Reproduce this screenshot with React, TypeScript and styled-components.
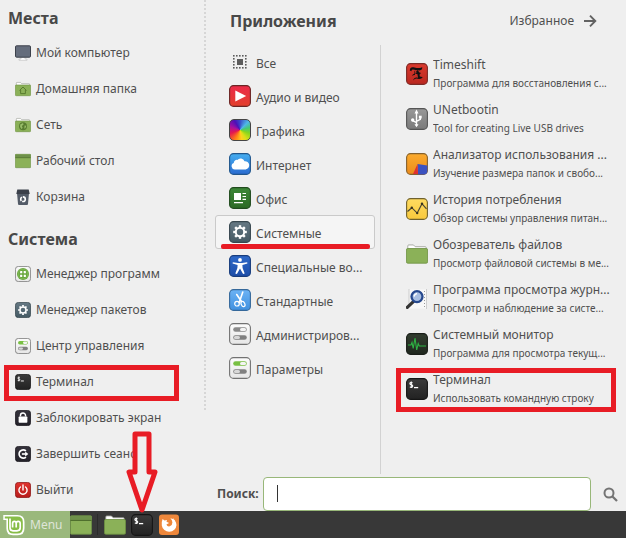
import React, { useState } from "react";
import styled, { createGlobalStyle, css } from "styled-components";

const red = "#e81c25";
const ink = "#4f4f4f";

const GlobalStyle = createGlobalStyle`
  *, *::before, *::after { box-sizing: border-box; }
  body {
    margin: 0;
    background: #efefef;
    color: ${ink};
    font-family: "Noto Sans", sans-serif;
    font-size: 12px;
    line-height: 18px;
  }
  button, input { font: inherit; color: inherit; }
  h2, p, ul { margin: 0; padding: 0; }
  svg { display: block; flex: none; }
`;

const Desktop = styled.div`
  display: flex;
  flex-direction: column;
  min-height: 100vh;
`;

const MenuWindow = styled.div`
  display: flex;
  flex: 1;
`;

const Sidebar = styled.nav`
  width: 204px;
  flex: none;
`;

const DottedDivider = styled.div`
  width: 2px;
  flex: none;
  margin-bottom: 101px;
  background: repeating-linear-gradient(#d6d6d6 0 2px, #efefef 2px 4px);
`;

const Heading = styled.h2`
  font-size: 16px;
  line-height: 22px;
  font-weight: 700;
  color: #484848;
`;

const SidebarHeading = styled(Heading)`
  padding: 7px 8px 6px;

  ul + & { padding-top: 13px; }
`;

const List = styled.ul`
  list-style: none;
`;

const Item = styled.li`
  position: relative;
`;

const plainButton = css`
  display: flex;
  align-items: center;
  gap: 5px;
  border: 0;
  background: none;
  text-align: left;
  white-space: nowrap;
  cursor: pointer;
`;

const PlaceButton = styled.button`
  ${plainButton}
  width: 100%;
  height: 36px;
  padding: 0 0 0 15px;
`;

const Main = styled.main`
  display: flex;
  flex: 1;
  flex-direction: column;
  min-width: 0;
`;

const MainHeader = styled.header`
  display: flex;
  align-items: center;
  justify-content: space-between;
  height: 45px;
  padding: 0 29px 4px 24px;
`;

const FavouritesButton = styled.button`
  ${plainButton}
  gap: 9px;
  padding: 0;
`;

const Columns = styled.div`
  display: flex;
  flex: 1;
  margin-bottom: 3px;
`;

const Categories = styled.nav`
  width: 174px;
  flex: none;
  padding: 0 5px 0 9px;
`;

const CategoryButton = styled.button<{ $selected: boolean }>`
  ${plainButton}
  width: 100%;
  height: 34px;
  padding: 0 0 0 13px;
  border: 1px solid ${(p) => (p.$selected ? "#cacaca" : "transparent")};
  border-radius: 3px;
  background: ${(p) => (p.$selected ? "#f5f5f5" : "transparent")};
`;

const CategoryLabel = styled.span`
  padding-top: 4px;
`;

const Applications = styled.section`
  flex: 1;
  min-width: 0;
  padding: 6px 0 0 25px;
  border-left: 1px solid #d2d2d2;
`;

const AppButton = styled.button`
  ${plainButton}
  width: 100%;
  height: 45px;
  padding: 0;
`;

const AppText = styled.span`
  display: flex;
  flex-direction: column;
  overflow: hidden;
`;

const AppSummary = styled.span`
  font-size: 10px;
`;

const SearchRow = styled.form`
  display: flex;
  align-items: center;
  height: 34px;
  padding: 0 8px 0 11px;
`;

const SearchLabel = styled.label`
  width: 46px;
  font-weight: 700;
`;

const SearchField = styled.div`
  position: relative;
  flex: 1;
  height: 34px;
`;

const SearchInput = styled.input`
  width: 100%;
  height: 100%;
  padding: 0 14px;
  border: 1px solid #98b779;
  border-radius: 4px;
  background: #fff;
  outline: 0;
`;

const Caret = styled.span`
  position: absolute;
  left: 14px;
  top: 8px;
  width: 1px;
  height: 17px;
  background: #333;
`;

const SearchButton = styled.button`
  ${plainButton}
  margin-left: 12px;
  padding: 0;
`;

const Highlight = styled.span<{ $left: number; $right: number; $top: number; $height: number }>`
  position: absolute;
  left: ${(p) => p.$left}px;
  right: ${(p) => p.$right}px;
  top: ${(p) => p.$top}px;
  height: ${(p) => p.$height}px;
  border: 5px solid ${red};
  pointer-events: none;
`;

const Underline = styled.span`
  position: absolute;
  left: 6px;
  right: 5px;
  bottom: 0;
  height: 5px;
  border-radius: 2px;
  background: ${red};
`;

const Taskbar = styled.footer`
  display: flex;
  align-items: center;
  height: 27px;
  background: #383838;
`;

const MenuButton = styled.button`
  ${plainButton}
  width: 70px;
  height: 27px;
  padding: 0 0 0 3px;
  background: #9ab87c;
  color: #dfe5d8;
`;

const TaskButton = styled.button`
  ${plainButton}
  position: relative;
  padding: 0;
`;

const TaskSeparator = styled.span`
  width: 1px;
  height: 21px;
  margin: 0 6px 0 5px;
  background: #2b2b2b;
`;

const TaskGroup = styled.div`
  display: flex;
  align-items: center;
  gap: 5px;
`;

const ArrowLayer = styled.span`
  position: absolute;
  left: -5px;
  bottom: 22px;
  pointer-events: none;
`;

type IconProps = { size?: number };

const Tile = ({ size = 22, from, to, edge, children }: IconProps & { from: string; to: string; edge: string; children?: React.ReactNode }) => {
  const id = React.useId();
  return (
    <svg width={size} height={size} viewBox="0 0 22 22" aria-hidden="true">
      <linearGradient id={id} x2="0" y2="1">
        <stop stopColor={from} />
        <stop offset="1" stopColor={to} />
      </linearGradient>
      <rect x=".6" y=".6" width="20.8" height="20.8" rx="4" fill={`url(#${id})`} stroke={edge} strokeWidth="1.1" />
      {children}
    </svg>
  );
};

const ComputerIcon = () => (
  <svg width="16" height="16" viewBox="0 0 16 16" aria-hidden="true">
    <path d="M6 12h4v2h2v1.300H4V14h2z" fill="#fff" stroke="#c2c2c2" strokeWidth=".7" />
    <rect x=".5" y=".8" width="15" height="11.400" rx="1" fill="#656d7c" stroke="#3c414b" />
  </svg>
);

const FolderIcon = ({ size = 16, mark }: IconProps & { mark?: "home" | "globe" }) => (
  <svg width={size} height={size} viewBox="0 0 16 16" aria-hidden="true">
    <path d="M1.300 5V2.200q0-.8.700-.8h3.400L6.700 2.700H14q.7 0 .7.700V5z" fill="#fff" stroke="#9a9d96" strokeWidth=".6" />
    <rect x=".3" y="4" width="15.400" height="10.700" rx="1" fill="#8bb158" stroke="#6d9141" strokeWidth=".6" />
    {mark === "home" && <path d="M4.500 9.500 8 6l3.500 3.500M5.600 9v3.600h4.800V9" fill="none" stroke="#53772b" strokeWidth=".9" />}
    {mark === "globe" && (
      <>
        <circle cx="8" cy="9.200" r="4" fill="#577c30" />
        <path d="M5.200 7.600 8 6l.6 1.600-1.800 1.500.8 1.500-.8 1.600-1.700-2.300zM9.600 8.400l1.700.3-.8 2.300-1.200.7z" fill="#98bd69" />
      </>
    )}
  </svg>
);

const DesktopIcon = ({ size = 16 }: IconProps) => (
  <svg width={size} height={size} viewBox="0 0 16 16" aria-hidden="true">
    <rect x=".3" y="1.300" width="15.400" height="13.400" rx=".7" fill="#8bb158" stroke="#6d8f46" strokeWidth=".6" />
    <path d="M.3 1.500h15.400v3.200H.3z" fill="#6e914a" />
    <path d="M.3 4.700h15.400" stroke="#4c6b2b" strokeWidth=".7" />
  </svg>
);

const TrashIcon = () => (
  <svg width="16" height="16" viewBox="0 0 16 16" aria-hidden="true">
    <path d="M2 4h12l-1 11q-.1 1-1 1H4q-.9 0-1-1z" fill="#535b67" />
    <path d="M2.300.5h11.400l1 4.500H1.300z" fill="#3b404a" />
    <circle cx="8" cy="10.200" r="2.300" fill="none" stroke="#fff" strokeWidth="1.600" strokeDasharray="4 .8" />
  </svg>
);

const SoftwareIcon = () => (
  <Tile size={16} from="#fafafa" to="#e8e8e8" edge="#777">
    <circle cx="11" cy="11" r="8.300" fill="#6aa83f" />
    <g fill="#fff">
      <rect x="7" y="7" width="3" height="3" rx=".5" />
      <rect x="12" y="7" width="3" height="3" rx=".5" />
      <rect x="7" y="12" width="3" height="3" rx=".5" />
      <rect x="12" y="12" width="3" height="3" rx=".5" />
    </g>
    <circle cx="11" cy="11" r="6.600" fill="none" stroke="#92c56b" strokeWidth=".7" />
  </Tile>
);

const GearIcon = ({ size = 22 }: IconProps) => (
  <Tile size={size} from="#667984" to="#455a64" edge="#37474f">
    <circle cx="11" cy="11" r="4.200" fill="none" stroke="#fff" strokeWidth="2" />
    <g stroke="#fff" strokeWidth="2.400">
      {[0, 45, 90, 135, 180, 225, 270, 315].map((a) => (
        <path key={a} d="M11 6.600V4.200" transform={`rotate(${a} 11 11)`} />
      ))}
    </g>
  </Tile>
);

const SwitchesIcon = ({ size = 22, on = false }: IconProps & { on?: boolean }) => (
  <Tile size={size} from="#fdfdfd" to="#e6e6e6" edge="#727272">
    <rect x="4.200" y="4.200" width="13.600" height="4.600" rx="2.300" fill={on ? "#79c043" : "#8a8a8a"} />
    <rect x="11" y="4.900" width="6.100" height="3.200" rx="1.600" fill="#f4f4f4" />
    <rect x="4.200" y="12.200" width="13.600" height="4.600" rx="2.300" fill="#808080" />
    <rect x="4.900" y="12.900" width="6.100" height="3.200" rx="1.600" fill="#d8d8d8" />
  </Tile>
);

const TerminalIcon = ({ size = 22 }: IconProps) => (
  <Tile size={size} from="#3b3b3b" to="#222" edge="#151515">
    <path d="M6.600 4.700Q4 4 3.900 5.400t1.400 1.300T6.700 8.200 3.800 9M5.300 3.400v6.600" fill="none" stroke="#fff" strokeWidth="1.100" />
    <path d="M8 9.600h4.200" stroke="#fff" strokeWidth="1.300" />
  </Tile>
);

const LockIcon = () => (
  <Tile size={16} from="#34323b" to="#232129" edge="#19171d">
    <rect x="5" y="9" width="12" height="8.500" rx="1" fill="#fff" />
    <path d="M7.500 9V7.500a3.500 3.500 0 0 1 7 0V9" fill="none" stroke="#fff" strokeWidth="2" />
  </Tile>
);

const LogoutIcon = () => (
  <Tile size={16} from="#34323b" to="#232129" edge="#19171d">
    <path d="M15 6.800a5.600 5.600 0 1 0 0 8.400" fill="none" stroke="#fff" strokeWidth="2.400" />
    <path d="M9.500 11H15" stroke="#fff" strokeWidth="2.200" />
    <path d="m14 7.500 4.300 3.500-4.300 3.500z" fill="#fff" />
  </Tile>
);

const PowerIcon = () => (
  <Tile size={16} from="#e0322d" to="#b71c1c" edge="#8a1414">
    <path d="M7.500 6.800a5.600 5.600 0 1 0 7 0M11 4v7" fill="none" stroke="#fff" strokeWidth="1.900" strokeLinecap="round" />
  </Tile>
);

const AllIcon = () => (
  <svg width="22" height="22" viewBox="0 0 22 22" aria-hidden="true">
    <g fill="#5c5c5c">
      {[4, 7, 10, 13, 16].map((n) => (
        <React.Fragment key={n}>
          <rect x={n} y="4" width="1.600" height="1.600" />
          <rect x={n} y="16" width="1.600" height="1.600" />
          {n > 4 && n < 16 && <rect x="4" y={n} width="1.600" height="1.600" />}
          {n > 4 && n < 16 && <rect x="16" y={n} width="1.600" height="1.600" />}
        </React.Fragment>
      ))}
      <rect x="8" y="8" width="6" height="6" />
    </g>
  </svg>
);

const MediaIcon = () => (
  <Tile from="#ec2a4a" to="#e23f2b" edge="#6a2524">
    <path d="m6.300 5.400 10.900 5.600-10.900 5.600z" fill="#fff" />
  </Tile>
);

const ColourWheel = styled.span`
  flex: none;
  width: 22px;
  height: 22px;
  border: 1px solid #444;
  border-radius: 5px;
  background: conic-gradient(#3949c8, #4fb6e8 45deg, #45c878 75deg, #86d51e 110deg, #d8e018 145deg, #ffd21c 170deg, #ff7a18 210deg, #e4184f 250deg, #a80fa0 290deg, #4a10b8 330deg, #3949c8);
`;

const InternetIcon = () => (
  <Tile from="#45aef0" to="#2a6bd0" edge="#21568c">
    <path d="M5.800 16.500a3.300 3.300 0 0 1-1-6.400 3 3 0 0 1 3.500-3.200 4.200 4.200 0 0 1 7.200 1.400 4 4 0 0 1 1.200 8.200z" fill="#fff" />
  </Tile>
);

const OfficeIcon = () => (
  <Tile from="#3d8838" to="#2c6a25" edge="#214b1e">
    <path d="M5 6h7v7H5zM5 15h9v1.300H5z" fill="#fff" />
    <path d="M13.500 6.500H17M13.500 9.500H17M13.500 12.400H17" stroke="#fff" strokeWidth="1.100" />
  </Tile>
);

const AccessibilityIcon = () => (
  <Tile from="#2e69c9" to="#1d4da8" edge="#183c7c">
    <circle cx="11" cy="4.900" r="1.900" fill="#fff" />
    <path d="M3.800 7.300 9 8h4l5.200-.7.200 1.300-5 1.300.2 3.100 2.100 5.500-1.600.6L11 13.600l-3.100 5.500-1.600-.6L8.400 13l.2-3.100-5-1.300z" fill="#fff" />
  </Tile>
);

const ScissorsIcon = () => (
  <Tile from="#6cb3f5" to="#4090df" edge="#35689a">
    <path d="m13.800 3-3.600 10.500M7.700 5.500l4.800 7" stroke="#fff" strokeWidth="1.600" strokeLinecap="round" />
    <circle cx="8" cy="14.700" r="2.300" fill="none" stroke="#fff" strokeWidth="1.200" />
    <ellipse cx="14" cy="15" rx="1.800" ry="2.800" transform="rotate(-25 14 15)" fill="none" stroke="#fff" strokeWidth="1.200" />
  </Tile>
);

const TimeshiftIcon = () => (
  <Tile from="#da3a2e" to="#b9271f" edge="#7b2b27">
    <path d="M3.800 7.400q.2-3.700 3.600-3.200 3.400.9 6.200.9 1.700 0 2.600-1.100.5 3-2.800 3.500-4.300-.6-6.500-1Q5.400 6.400 5.500 8.200z" fill="#111" />
    <path d="M9.200 6.800q-1.300 2-.6 3.700-2 .7-2.700 2.400 1.500-.9 3-.8M11.200 7q3.200 2.100 2.400 6.300 1.500 1 3.200.7-1.700 2.700-5 1.800-2.700-.8-4.700 1.600 1-3.700 5-2.700-.3-4.100-2-6z" fill="#111" />
    <path d="M9.500 10.300h5" stroke="#111" strokeWidth="1.300" />
  </Tile>
);

const UsbIcon = () => (
  <Tile from="#989898" to="#7a7a7a" edge="#555">
    <path d="M10.500 4v14M10.500 14.700l-3.800-2M10.500 13.300l3.800-2V8" fill="none" stroke="#fff" strokeWidth="1.400" />
    <path d="m8.500 5.500 2-4 2 4zM8.500 16.300h4l-2 3z" fill="#fff" />
    <circle cx="6.700" cy="12" r="1.700" fill="#fff" />
    <path d="M12.900 7.700h2.800v2.800h-2.800z" fill="#fff" />
  </Tile>
);

const DiskIcon = () => (
  <Tile from="#fbab2d" to="#ec8b1c" edge="#85612d">
    <path d="m11.500 11 9.900 1.600V18q0 3.400-3.400 3.400h-6z" fill="#3c52bf" />
    <path d="M11.500 11 7 21h5z" fill="#df3130" />
  </Tile>
);

const PowerHistoryIcon = () => (
  <Tile from="#fedb61" to="#f9c93c" edge="#6f612e">
    <path d="m1.500 13.500 4.300-3.800 5.400 5.400L16 5.800l4.500 5" fill="none" stroke="#4b4633" strokeWidth="1.200" />
    <g fill="#35321f">
      <circle cx="5.800" cy="9.700" r="1.200" />
      <circle cx="11.200" cy="15.100" r="1.200" />
      <circle cx="16" cy="5.800" r="1.200" />
    </g>
  </Tile>
);

const LogViewerIcon = () => (
  <svg width="22" height="22" viewBox="0 0 22 22" aria-hidden="true">
    <path d="M3 1.500h18v19H3z" fill="#f8f8f8" />
    <path d="M3 1v18M20.500 1v20" stroke="#c4c4c4" strokeWidth=".8" />
    <path d="M18.500 3v17" stroke="#999" strokeDasharray="1 2" />
    <path d="m7.600 13.300-6.300 6" stroke="#353535" strokeWidth="3.200" strokeLinecap="round" />
    <circle cx="11" cy="8.600" r="5.500" fill="#a9bfe2" stroke="#27498e" strokeWidth="2.300" />
    <path d="M8 8.500q.5-2.500 3-3" fill="none" stroke="#fff" strokeWidth="1.500" />
  </svg>
);

const MonitorIcon = () => (
  <Tile from="#333d30" to="#1f271e" edge="#1a1e19">
    <path d="M2 12h3l1-2.500 1.200 6L9 5l1.700 12 1.500-6.500 1 2.500H20" fill="none" stroke="#2fb344" strokeWidth="1.100" />
  </Tile>
);

const FirefoxIcon = () => (
  <svg width="22" height="22" viewBox="0 0 22 22" aria-hidden="true">
    <rect x="1" y=".5" width="20" height="20.500" rx="3" fill="#ee873b" />
    <path d="M4.600 5 6.500 6.600 9 6.100 8.500 7.800l2.600 1.100-2.700 1.600q.9 2.400 3.400 1.800 2.700-1 2.600-3.700-.1-2.600-2-4.300 5.700 1.200 6.100 6.600a7.400 7.400 0 0 1-14.700.6Q3.300 8 4.600 5" fill="#fff" />
    <path d="m14.700 3.800 2.700 3.400-1.700-.6z" fill="#fff" />
  </svg>
);

const MintLogo = () => (
  <svg width="22" height="22" viewBox="0 0 22 22" aria-hidden="true">
    <path d="M.3 1h14.200q7 0 7 7v6.200q0 7-7 7H10q-6.600 0-6.600-6.700V6H.3z" fill="#fff" />
    <path d="M1.800 2.500h12.500q5.500 0 5.500 5.500v6q0 5.600-5.500 5.600H10.500q-5.500 0-5.500-5.500V4.500H1.800z" fill="#88bd48" />
    <path d="M7 4.600v9.200q0 3 3 3h4q3.200 0 3.200-3V9.400q0-2.100-2-2.100t-2 2.100v4M13.200 9.400q0-2.100-1.800-2.100-1.800 0-1.800 2.100v4" fill="none" stroke="#fff" strokeWidth="1.700" />
  </svg>
);

const ForwardArrow = () => (
  <svg width="14" height="14" viewBox="0 0 14 14" aria-hidden="true">
    <path d="M1 7h11M7 1.700 12.300 7 7 12.300" fill="none" stroke="#626262" strokeWidth="1.900" />
  </svg>
);

const SearchIcon = () => (
  <svg width="15" height="15" viewBox="0 0 15 15" aria-hidden="true">
    <circle cx="6" cy="6" r="4.500" fill="none" stroke="#747474" strokeWidth="2" />
    <path d="m9.200 9.200 4.800 4.800" stroke="#747474" strokeWidth="2.300" />
  </svg>
);

const PointerArrow = () => (
  <svg width="32" height="83" viewBox="0 0 32 83" aria-hidden="true">
    <path d="M9 3h14v38h6L16 79 3 41h6z" fill="none" stroke={red} strokeWidth="5" strokeLinejoin="round" />
  </svg>
);

const places = [
  { label: "Мой компьютер", icon: <ComputerIcon /> },
  { label: "Домашняя папка", icon: <FolderIcon mark="home" /> },
  { label: "Сеть", icon: <FolderIcon mark="globe" /> },
  { label: "Рабочий стол", icon: <DesktopIcon /> },
  { label: "Корзина", icon: <TrashIcon /> },
];

const system = [
  { label: "Менеджер программ", icon: <SoftwareIcon /> },
  { label: "Менеджер пакетов", icon: <GearIcon size={16} /> },
  { label: "Центр управления", icon: <SwitchesIcon size={16} on /> },
  { label: "Терминал", icon: <TerminalIcon size={16} />, marked: true },
  { label: "Заблокировать экран", icon: <LockIcon /> },
  { label: "Завершить сеанс", icon: <LogoutIcon /> },
  { label: "Выйти", icon: <PowerIcon /> },
];

const categories = [
  { label: "Все", icon: <AllIcon /> },
  { label: "Аудио и видео", icon: <MediaIcon /> },
  { label: "Графика", icon: <ColourWheel /> },
  { label: "Интернет", icon: <InternetIcon /> },
  { label: "Офис", icon: <OfficeIcon /> },
  { label: "Системные", icon: <GearIcon /> },
  { label: "Специальные во...", icon: <AccessibilityIcon /> },
  { label: "Стандартные", icon: <ScissorsIcon /> },
  { label: "Администриров...", icon: <SwitchesIcon /> },
  { label: "Параметры", icon: <SwitchesIcon on /> },
];

const apps = [
  { name: "Timeshift", summary: "Программа для восстановления с...", icon: <TimeshiftIcon /> },
  { name: "UNetbootin", summary: "Tool for creating Live USB drives", icon: <UsbIcon /> },
  { name: "Анализатор использования ...", summary: "Изучение размера папок и свобо...", icon: <DiskIcon /> },
  { name: "История потребления", summary: "Обзор системы управления питан...", icon: <PowerHistoryIcon /> },
  { name: "Обозреватель файлов", summary: "Просмотр файловой системы в ме...", icon: <FolderIcon size={22} /> },
  { name: "Программа просмотра журн...", summary: "Просмотр и наблюдение за систе...", icon: <LogViewerIcon /> },
  { name: "Системный монитор", summary: "Программа для просмотра текущ...", icon: <MonitorIcon /> },
  { name: "Терминал", summary: "Использовать командную строку", icon: <TerminalIcon />, marked: true },
];

export default function App() {
  const [selected, setSelected] = useState("Системные");
  const [query, setQuery] = useState("");

  return (
    <Desktop>
      <GlobalStyle />
      <MenuWindow>
        <Sidebar>
          <SidebarHeading>Места</SidebarHeading>
          <List>
            {places.map((p) => (
              <Item key={p.label}>
                <PlaceButton>{p.icon}{p.label}</PlaceButton>
              </Item>
            ))}
          </List>
          <SidebarHeading>Система</SidebarHeading>
          <List>
            {system.map((s) => (
              <Item key={s.label}>
                <PlaceButton>{s.icon}{s.label}</PlaceButton>
                {s.marked && <Highlight $left={4} $right={25} $top={1} $height={36} />}
              </Item>
            ))}
          </List>
        </Sidebar>
        <DottedDivider />
        <Main>
          <MainHeader>
            <Heading>Приложения</Heading>
            <FavouritesButton>Избранное<ForwardArrow /></FavouritesButton>
          </MainHeader>
          <Columns>
            <Categories>
              <List>
                {categories.map((c) => (
                  <Item key={c.label}>
                    <CategoryButton $selected={c.label === selected} onClick={() => setSelected(c.label)}>
                      {c.icon}
                      <CategoryLabel>{c.label}</CategoryLabel>
                    </CategoryButton>
                    {c.label === "Системные" && <Underline />}
                  </Item>
                ))}
              </List>
            </Categories>
            <Applications>
              <List>
                {apps.map((a) => (
                  <Item key={a.name}>
                    <AppButton>
                      {a.icon}
                      <AppText>
                        <span>{a.name}</span>
                        <AppSummary>{a.summary}</AppSummary>
                      </AppText>
                    </AppButton>
                    {a.marked && <Highlight $left={-10} $right={10} $top={2} $height={44} />}
                  </Item>
                ))}
              </List>
            </Applications>
          </Columns>
          <SearchRow onSubmit={(e) => e.preventDefault()}>
            <SearchLabel htmlFor="search">Поиск:</SearchLabel>
            <SearchField>
              <SearchInput id="search" type="text" value={query} onChange={(e) => setQuery(e.target.value)} />
              {query === "" && <Caret />}
            </SearchField>
            <SearchButton type="submit" aria-label="Поиск"><SearchIcon /></SearchButton>
          </SearchRow>
        </Main>
      </MenuWindow>
      <Taskbar>
        <MenuButton><MintLogo />Menu</MenuButton>
        <TaskButton aria-label="Рабочий стол"><DesktopIcon size={22} /></TaskButton>
        <TaskSeparator />
        <TaskGroup>
          <TaskButton aria-label="Обозреватель файлов"><FolderIcon size={22} /></TaskButton>
          <TaskButton aria-label="Терминал">
            <TerminalIcon />
            <ArrowLayer><PointerArrow /></ArrowLayer>
          </TaskButton>
          <TaskButton aria-label="Firefox"><FirefoxIcon /></TaskButton>
        </TaskGroup>
      </Taskbar>
    </Desktop>
  );
}
